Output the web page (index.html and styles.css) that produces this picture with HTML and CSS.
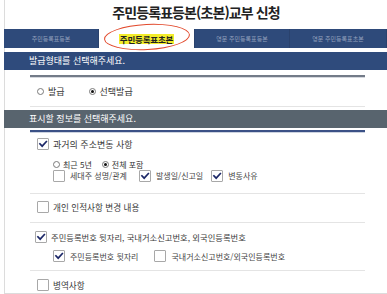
FILE: index.html
```html
<!DOCTYPE html>
<html lang="ko">
<head>
<meta charset="utf-8">
<link rel="stylesheet" href="styles.css">
</head>
<body>
<div class="page">
  <h1 class="title">주민등록표등본(초본)교부 신청</h1>
  <nav class="tabs">
    <div class="tab">주민등록표등본</div>
    <div class="tab active"><span class="mark">주민등록표초본</span><span class="circle"></span></div>
    <div class="tab">영문 주민등록표등본</div>
    <div class="tab">영문 주민등록표초본</div>
  </nav>

  <div class="head head-blue">발급형태를 선택해주세요.</div>
  <div class="panel">
    <div class="rule rule-dark"></div>
    <div class="issue-row">
      <label class="radio"><span class="dot"></span>발급</label>
      <label class="radio"><span class="dot on"></span>선택발급</label>
    </div>
    <div class="rule"></div>
  </div>

  <div class="head head-gray">표시할 정보를 선택해주세요.</div>
  <div class="panel">
    <div class="rule rule-blue"></div>

    <div class="group g1">
      <div class="row main"><span class="box on"><svg viewBox="0 0 12 12"><path d="M2.3 5.8 L5 8.6 L10 3.2"/></svg></span>과거의 주소변동 사항</div>
      <div class="row sub radios">
        <label class="radio"><span class="dot"></span>최근 5년</label>
        <label class="radio"><span class="dot on"></span>전체 포함</label>
      </div>
      <div class="row sub checks">
        <span class="box"></span><span class="lbl w1">세대주 성명/관계</span>
        <span class="box on"><svg viewBox="0 0 12 12"><path d="M2.3 5.8 L5 8.6 L10 3.2"/></svg></span><span class="lbl w2">발생일/신고일</span>
        <span class="box on"><svg viewBox="0 0 12 12"><path d="M2.3 5.8 L5 8.6 L10 3.2"/></svg></span><span class="lbl">변동사유</span>
      </div>
    </div>
    <div class="rule"></div>

    <div class="group g2">
      <div class="row main"><span class="box"></span>개인 인적사항 변경 내용</div>
    </div>
    <div class="rule"></div>

    <div class="group g3">
      <div class="row main"><span class="box on"><svg viewBox="0 0 12 12"><path d="M2.3 5.8 L5 8.6 L10 3.2"/></svg></span>주민등록번호 뒷자리, 국내거소신고번호, 외국인등록번호</div>
      <div class="row sub checks">
        <span class="box on"><svg viewBox="0 0 12 12"><path d="M2.3 5.8 L5 8.6 L10 3.2"/></svg></span><span class="lbl w3">주민등록번호 뒷자리</span>
        <span class="box"></span><span class="lbl">국내거소신고번호/외국인등록번호</span>
      </div>
    </div>
    <div class="rule"></div>

    <div class="group g4">
      <div class="row main"><span class="box"></span>병역사항</div>
    </div>
  </div>
</div>
</body>
</html>
```

FILE: styles.css
```css
* { box-sizing: border-box; }
html, body { margin: 0; padding: 0; background: #fff; }
body {
  font-family: "Noto Sans CJK KR", "Noto Sans", sans-serif;
  color: #333;
  width: 387px;
  height: 294px;
  overflow: hidden;
}
.page {
  margin-left: 4px;
  border-left: 1px solid #dcdcdc;
  border-bottom: 1px solid #dcdcdc;
  height: 294px;
}
.title {
  margin: 0;
  height: 29px;
  line-height: 25px;
  text-align: center;
  font-size: 14px;
  font-weight: 700;
  letter-spacing: -0.9px;
  color: #222;
}
.tabs {
  display: grid;
  grid-template-columns: 95px 96px 95px 1fr;
  height: 19px;
  background: #2e4a7a;
  margin-left: -1px;
}
.tab {
  display: flex;
  align-items: center;
  justify-content: center;
  font-size: 6px;
  color: #94a1bd;
  border-right: 1px solid #2a426d;
  white-space: nowrap;
}
.tab.active {
  position: relative;
  background: #fff;
  font-size: 8.5px;
  font-weight: 700;
  color: #222;
  letter-spacing: -0.2px;
}
.mark {
  background: #f3ec2a;
  padding: 0 1px;
  line-height: 10px;
}
.circle {
  position: absolute;
  left: 5px;
  top: -5px;
  width: 86px;
  height: 26px;
  border: 1.5px solid #e2492c;
  border-radius: 50%;
  transform: rotate(-3deg);
}
.head {
  margin-left: -1px;
  height: 18px;
  line-height: 18px;
  padding-left: 25px;
  font-size: 9px;
  color: #fff;
}
.head-blue { background: #2f4b7c; margin-top: 4px; }
.head-gray { background: #58646e; margin-top: 3px; }
.panel {
  padding: 0 22px 0 25px;
}
.rule {
  height: 1px;
  background: #e4e4e4;
}
.rule-dark {
  height: 2px;
  background: #737b88;
  margin-top: 5px;
  box-shadow: 0 1px 0 #d5d8de;
}
.rule-blue {
  height: 2px;
  background: #3b5186;
  margin-top: 2px;
  box-shadow: 0 1px 0 #cdd3e0;
}
.issue-row {
  height: 29px;
  display: flex;
  align-items: center;
  padding-left: 7px;
  gap: 24px;
}
.radio {
  display: flex;
  align-items: center;
  gap: 4px;
  font-size: 9px;
  color: #333;
}
.dot {
  width: 7px;
  height: 7px;
  border: 1px solid #7a7a7a;
  border-radius: 50%;
  display: flex;
  align-items: center;
  justify-content: center;
}
.dot.on::after {
  content: "";
  width: 3px;
  height: 3px;
  border-radius: 50%;
  background: #111;
}
.group { display: flex; flex-direction: column; }
.g1 { padding: 4px 0 11px; }
.g2 { padding: 6px 0 8px; }
.g3 { padding: 7px 0 7px; }
.g4 { padding: 7px 0 1px; }
.row {
  display: flex;
  align-items: center;
  white-space: nowrap;
}
.row.main {
  height: 16px;
  padding-left: 7px;
  gap: 4px;
  font-size: 9px;
  color: #3a3a3a;
}
.g2 .row.main, .g3 .row.main, .g4 .row.main { height: 14px; font-size: 8.6px; }
.g3 .row.main { padding-left: 5px; font-size: 8.3px; }
.row.sub { padding-left: 23px; }
.row.radios {
  height: 10px;
  margin-top: 7px;
  gap: 10px;
}
.row.radios .radio { font-size: 8px; gap: 3px; }
.row.checks {
  height: 13px;
  font-size: 8px;
  color: #444;
}
.g3 .row.checks { height: 14px; margin-top: 5px; }
.lbl { margin-left: 5px; margin-right: 8px; }
.lbl.w1 { margin-right: 12px; }
.lbl.w3 { margin-right: 16px; }
.box {
  flex: none;
  width: 12px;
  height: 12px;
  border: 1px solid #a8a8a8;
  border-radius: 1px;
  background: #fff;
  display: flex;
}
.box svg { width: 10px; height: 10px; }
.box path {
  fill: none;
  stroke: #1c2868;
  stroke-width: 2;
  stroke-linecap: square;
}
```
